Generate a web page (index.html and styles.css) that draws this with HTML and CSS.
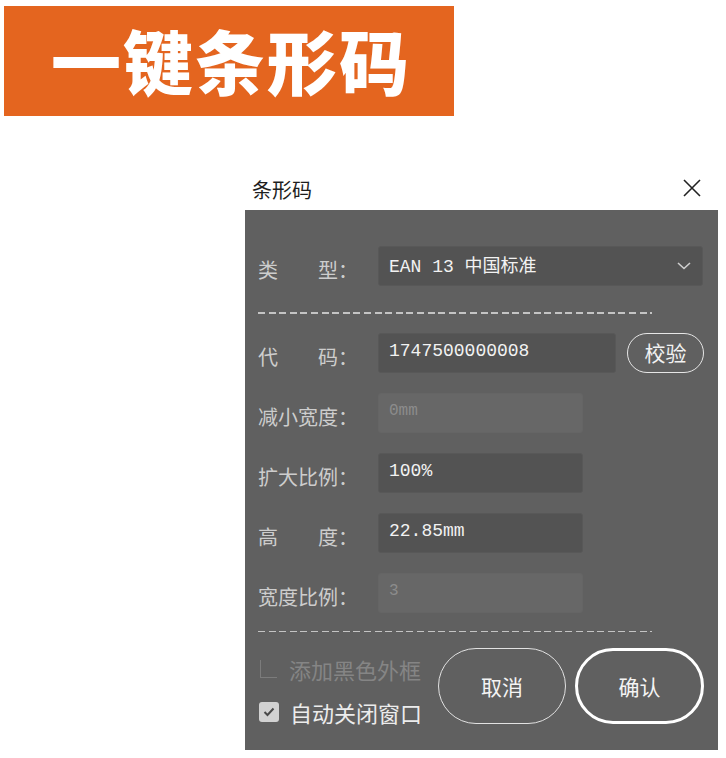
FILE: index.html
```html
<!DOCTYPE html>
<html lang="zh-CN">
<head>
<meta charset="utf-8">
<title>一键条形码</title>
<link rel="stylesheet" href="styles.css">
</head>
<body>
<div class="banner"><span class="banner-text">一键条形码</span></div>

<div class="dialog">
  <div class="dialog-head">
    <span class="dialog-title">条形码</span>
    <svg class="close" width="20" height="20" viewBox="0 0 20 20"><path d="M2 2 L18 18 M18 2 L2 18" stroke="#222" stroke-width="1.6" fill="none"/></svg>
  </div>
  <div class="panel">
    <div class="row">
      <span class="label">类　　型：</span>
      <div class="field select wide">
        <span class="val">EAN 13 中国标准</span>
        <svg class="chev" width="14" height="8" viewBox="0 0 14 8"><path d="M1 1 L7 6.5 L13 1" stroke="#cfcfcf" stroke-width="1.6" fill="none"/></svg>
      </div>
    </div>
    <div class="dash dash1"></div>
    <div class="row">
      <span class="label">代　　码：</span>
      <div class="field code"><span class="val">1747500000008</span></div>
      <button class="verify">校验</button>
    </div>
    <div class="row">
      <span class="label">减小宽度：</span>
      <div class="field std disabled"><span class="val">0mm</span></div>
    </div>
    <div class="row">
      <span class="label">扩大比例：</span>
      <div class="field std"><span class="val">100%</span></div>
    </div>
    <div class="row">
      <span class="label">高　　度：</span>
      <div class="field std"><span class="val">22.85mm</span></div>
    </div>
    <div class="row">
      <span class="label">宽度比例：</span>
      <div class="field std disabled"><span class="val">3</span></div>
    </div>
    <div class="dash dash2"></div>
    <div class="bottom">
      <div class="checks">
        <div class="check off"><span class="box-off"></span><span>添加黑色外框</span></div>
        <div class="check on"><span class="box-on"><svg width="12" height="10" viewBox="0 0 12 10"><path d="M1.5 5 L4.5 8 L10.5 1.5" stroke="#4a4a4a" stroke-width="2" fill="none"/></svg></span><span>自动关闭窗口</span></div>
      </div>
      <button class="pill cancel">取消</button>
      <button class="pill ok">确认</button>
    </div>
  </div>
</div>
</body>
</html>
```
FILE: styles.css
```css
html, body {
  margin: 0;
  padding: 0;
  background: #ffffff;
}
body {
  width: 726px;
  height: 758px;
  overflow: hidden;
  font-family: "Noto Sans CJK SC", "Noto Sans", sans-serif;
}
.banner {
  margin: 6px 0 0 4px;
  width: 450px;
  height: 110px;
  background: #e4651f;
  display: flex;
  align-items: center;
  box-sizing: border-box;
  padding-left: 47px;
}
.banner-text {
  color: #ffffff;
  font-size: 70px;
  font-weight: 900;
  letter-spacing: 2px;
  line-height: 1;
  margin-top: -2px;
}
.dialog {
  margin: 50px 0 0 245px;
  width: 473px;
}
.dialog-head {
  height: 44px;
  display: flex;
  align-items: center;
  justify-content: space-between;
  padding: 0 16px 0 7px;
}
.dialog-title {
  font-size: 20px;
  color: #1e1e1e;
  margin-top: 2px;
}
.panel {
  background: #606060;
  height: 540px;
  box-sizing: border-box;
  padding: 36px 0 0 13px;
}
.row {
  display: flex;
  align-items: center;
  height: 40px;
  margin-bottom: 20px;
}
.label {
  width: 120px;
  flex: none;
  font-size: 20px;
  color: #cdcdcd;
  padding-top: 8px;
  line-height: 1;
}
.field {
  height: 40px;
  box-sizing: border-box;
  background: #535353;
  border: 1px solid #585858;
  border-radius: 3px;
  display: flex;
  align-items: center;
  padding: 0 10px;
  color: #f2f2f2;
  font-family: "Liberation Mono", "Noto Sans CJK SC", monospace;
  font-size: 18px;
}
.val {
  margin-top: -4px;
}
.wide {
  width: 325px;
  justify-content: space-between;
}
.chev {
  margin-right: 1px;
}
.code {
  width: 238px;
}
.std {
  width: 205px;
}
.disabled {
  background: #676767;
  border-color: #656565;
  color: #8c8c8c;
  font-size: 16px;
}
.verify {
  margin-left: 11px;
  width: 77px;
  height: 40px;
  border: 1.5px solid #e6e6e6;
  border-radius: 20px;
  background: transparent;
  color: #f2f2f2;
  font-family: "Noto Sans CJK SC", sans-serif;
  font-size: 21px;
  padding: 0;
  line-height: 1;
}
.dash {
  width: 394px;
  height: 1.5px;
  background: repeating-linear-gradient(90deg, #c4c4c4 0 7px, transparent 7px 10.6px);
}
.dash1 {
  margin: 26px 0 19px;
}
.dash2 {
  margin: -2px 0 16px;
}
.bottom {
  display: flex;
  align-items: flex-start;
}
.checks {
  width: 180px;
  flex: none;
  display: flex;
  flex-direction: column;
  padding-top: 9px;
}
.check {
  display: flex;
  align-items: center;
  font-size: 22px;
  height: 24px;
  white-space: nowrap;
}
.check.off {
  color: #858585;
  margin-bottom: 19px;
}
.check.on {
  color: #ececec;
}
.box-off {
  width: 17px;
  height: 18px;
  box-sizing: border-box;
  border-left: 1.5px solid #7c7c7c;
  border-bottom: 1.5px solid #7c7c7c;
  margin: 0 12px 0 2px;
}
.box-on {
  width: 20px;
  height: 20px;
  background: #d2d2d2;
  border-radius: 3px;
  display: flex;
  align-items: center;
  justify-content: center;
  margin: 0 11px 0 1px;
}
.pill {
  height: 76px;
  border-radius: 38px;
  background: transparent;
  color: #f4f4f4;
  font-family: "Noto Sans CJK SC", sans-serif;
  font-size: 21px;
  padding: 0;
}
.cancel {
  width: 128px;
  border: 1.5px solid #e2e2e2;
}
.ok {
  width: 129px;
  margin-left: 9px;
  border: 3px solid #ffffff;
}
```
